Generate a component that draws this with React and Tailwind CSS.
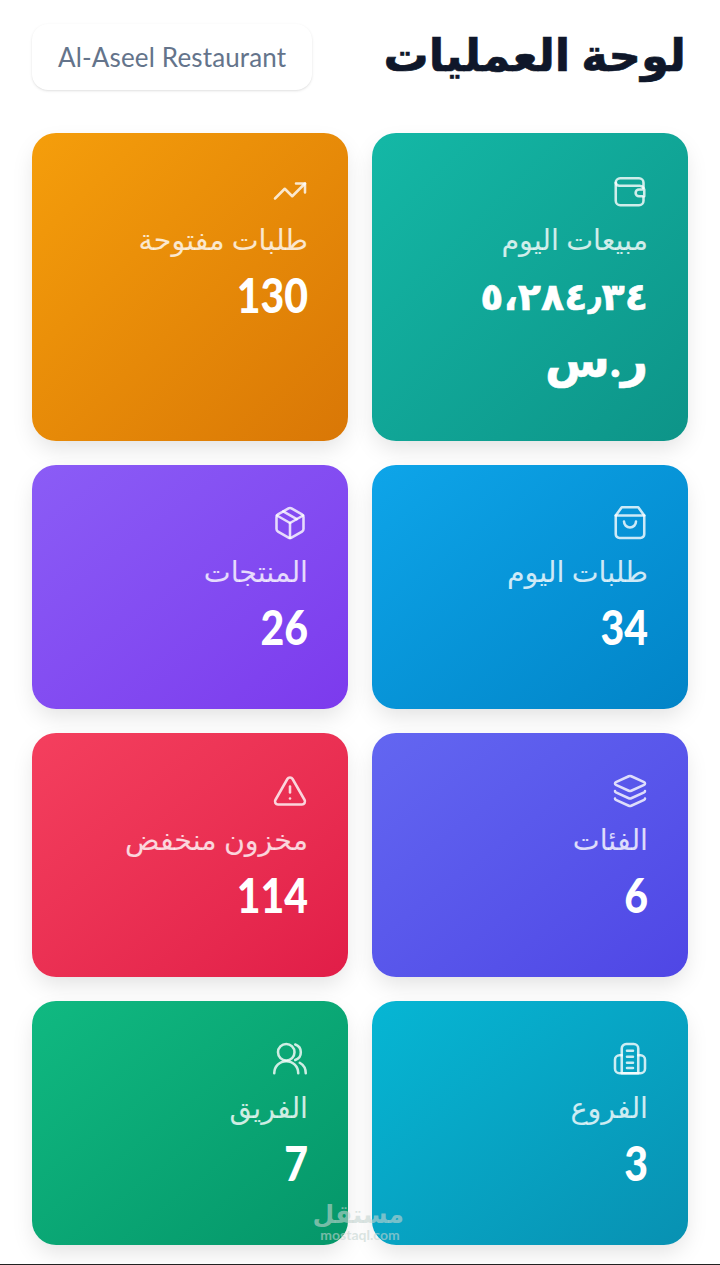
import { TrendingUp, Package, Layers, TriangleAlert } from "lucide-react";

const iconProps = {
  viewBox: "0 0 24 24",
  fill: "none",
  stroke: "currentColor",
  strokeWidth: "1.7",
  strokeLinecap: "round",
  strokeLinejoin: "round",
};

const WalletIcon = ({ className }) => (
  <svg className={className} {...iconProps}>
    <path d="M21 10V6.500A3 3 0 0 0 18 3.500H5.500a3 3 0 0 0-3 3V18.500a3 3 0 0 0 3 3H18a3 3 0 0 0 3-3V16" />
    <path d="M2.500 6.500a2.500 2.500 0 0 0 2.500 2h13a3 3 0 0 1 3 1.500" />
    <path d="M21.500 11h-3.500a2.250 2.250 0 0 0 0 4.500h3.500z" />
  </svg>
);

const BagIcon = ({ className }) => (
  <svg className={className} {...iconProps}>
    <path d="M6.500 1.500h11L21.500 7v12.500a2.500 2.500 0 0 1-2.500 2.500H5a2.500 2.500 0 0 1-2.500-2.500V7z" />
    <path d="M2.500 7h19" />
    <path d="M16 11a4 4 0 0 1-8 0" />
  </svg>
);

const BuildingIcon = ({ className }) => (
  <svg className={className} {...iconProps}>
    <path d="M6.500 21.500V5A3 3 0 0 1 9.500 2h5a3 3 0 0 1 3 3v16.500z" />
    <path d="M6.500 9.500H5a3 3 0 0 0-3 3v6a3 3 0 0 0 3 3h14a3 3 0 0 0 3-3v-6a3 3 0 0 0-3-3h-1.500" />
    <path d="M10 6.500h4M10 10.500h4M10 14.500h4M10 18h4" />
  </svg>
);

const TeamIcon = ({ className }) => (
  <svg className={className} {...iconProps}>
    <circle cx="9.500" cy="7.500" r="5.500" />
    <path d="M1.500 21.500c0-4.500 3.500-8 8-8s8 3.500 8 8" />
    <path d="M15.500 2.300a5.500 5.500 0 0 1 0 10.400" />
    <path d="M18.500 14.500c2.500 1.400 4 4 4 7" />
  </svg>
);

const cards = [
  { title: "مبيعات اليوم", value: "٥،٢٨٤٫٣٤", unit: "ر.س", Icon: WalletIcon, bg: "from-[#14b8a6] to-[#0d9488]" },
  { title: "طلبات مفتوحة", value: "130", Icon: TrendingUp, bg: "from-[#f59e0b] to-[#d97706]" },
  { title: "طلبات اليوم", value: "34", Icon: BagIcon, bg: "from-[#0ea5e9] to-[#0284c7]" },
  { title: "المنتجات", value: "26", Icon: Package, bg: "from-[#8b5cf6] to-[#7c3aed]" },
  { title: "الفئات", value: "6", Icon: Layers, bg: "from-[#6366f1] to-[#4f46e5]" },
  { title: "مخزون منخفض", value: "114", Icon: TriangleAlert, bg: "from-[#f43f5e] to-[#e11d48]" },
  { title: "الفروع", value: "3", Icon: BuildingIcon, bg: "from-[#06b6d4] to-[#0891b2]" },
  { title: "الفريق", value: "7", Icon: TeamIcon, bg: "from-[#10b981] to-[#059669]" },
];

const StatCard = ({ title, value, unit, Icon, bg }) => (
  <div
    className={`rounded-[24px] bg-linear-to-br ${bg} px-10 pt-10 pb-[50px] text-white shadow-[0_10px_24px_-4px_rgba(0,0,0,0.13)]`}
  >
    <Icon className="size-9 text-white/80" strokeWidth={1.7} />
    <p className="mt-[12px] h-9 text-[28.500px] leading-[36px] text-white/80">{title}</p>
    {unit ? (
      <div className="mt-[6px] h-[128px] font-bold [-webkit-text-stroke:0.6px_white]">
        <p className="h-16 text-[38px] leading-[64px]">{value}</p>
        <p className="h-16 text-[47px] leading-[64px]">{unit}</p>
      </div>
    ) : (
      <p className="mt-[6px] h-16 origin-right scale-y-[1.18] text-[41px] leading-[64px] font-black">{value}</p>
    )}
  </div>
);

const App = () => {
  return (
    <div
      dir="rtl"
      className="relative h-[1265px] overflow-hidden border-b border-[#222] bg-white px-8 pt-[22px] font-['Lato','DejaVu_Sans',sans-serif]"
    >
      <div className="flex h-[70px] items-center justify-between">
        <h1 className="mr-[2px] -translate-y-[3px] text-[45px] leading-[56px] font-bold text-[#0f172a] [-webkit-text-stroke:0.7px_#0f172a]">
          لوحة العمليات
        </h1>
        <span className="rounded-2xl bg-white px-[26px] py-[17px] text-[26px] leading-[32px] tracking-[0.15px] text-[#64748b] shadow-sm">
          Al-Aseel Restaurant
        </span>
      </div>
      <div className="mt-[41px] grid grid-cols-2 gap-6">
        {cards.map((card) => (
          <StatCard key={card.title} {...card} />
        ))}
      </div>
      <div className="pointer-events-none absolute top-[1198px] left-[316px] w-[88px] text-center text-[#c4d4d0]/60">
        <div className="text-[25px] leading-[30px] font-bold whitespace-nowrap">مستقل</div>
        <div className="text-[14px] leading-[14px] font-bold whitespace-nowrap" dir="ltr">
          mostaql.com
        </div>
      </div>
    </div>
  );
};

export default App;
